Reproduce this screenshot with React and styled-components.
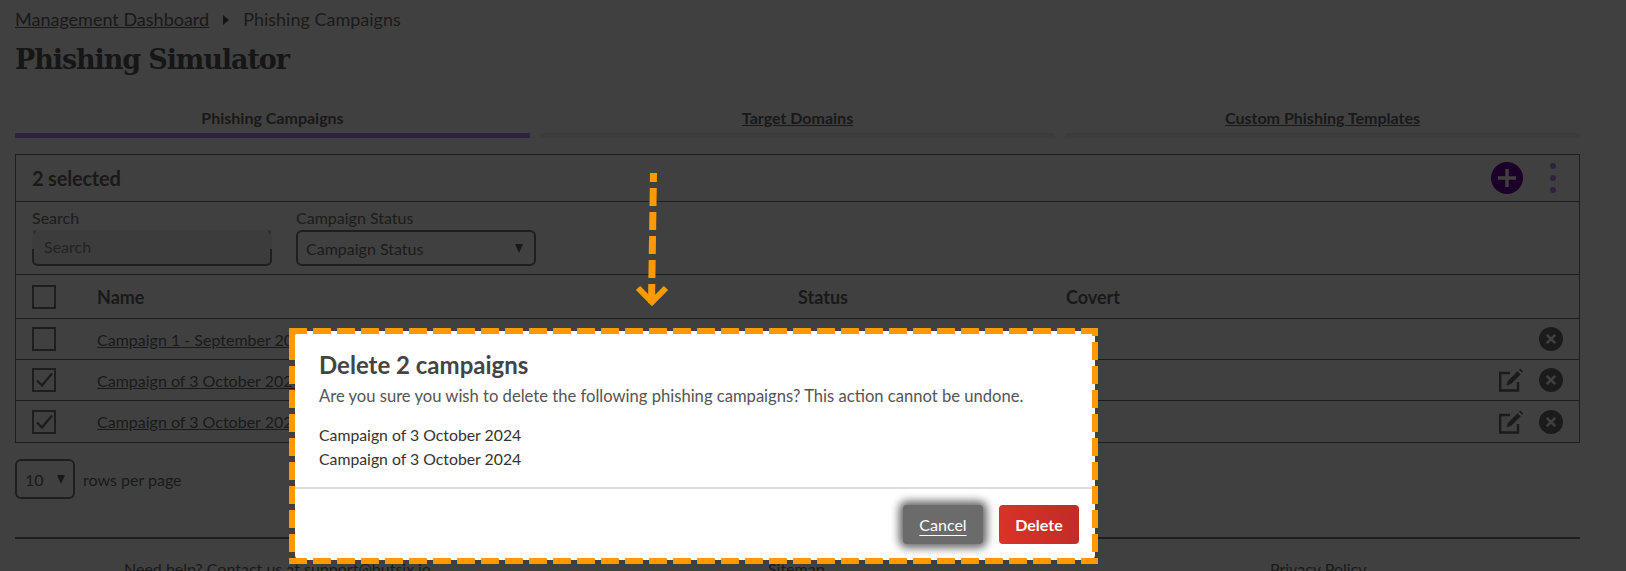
import React from "react";
import styled, { createGlobalStyle } from "styled-components";

const Global = createGlobalStyle`
  html, body { margin: 0; padding: 0; height: 571px; overflow: hidden; background: #fff; }
  body { font-family: Lato, "Liberation Sans", sans-serif; font-size: 16px; color: #666; }
  * { box-sizing: border-box; }
`;

const Page = styled.div`
  position: relative;
  width: 1626px;
  height: 571px;
  overflow: hidden;
`;
const Content = styled.main`
  width: 1596px;
  padding: 8px 0 0 15px;
  display: flex;
  flex-direction: column;
  height: 571px;
`;
const Breadcrumb = styled.nav`
  display: flex;
  align-items: center;
  height: 24px;
  font-size: 18px;
  color: #6e6e6e;
`;
const CrumbLink = styled.a`
  color: #666;
  text-decoration: underline;
`;
const Caret = styled.span`
  width: 0;
  height: 0;
  margin: 2px 14px 0 14px;
  border-left: 6px solid #555;
  border-top: 5px solid transparent;
  border-bottom: 5px solid transparent;
`;
const Title = styled.h1`
  margin: 11px 0 0;
  height: 38px;
  line-height: 38px;
  font-family: "DejaVu Serif", serif;
  font-size: 27px;
  font-weight: 700;
  letter-spacing: -1.1px;
  color: #5a5a5a;
`;
const Tabs = styled.div`
  display: flex;
  gap: 10px;
  margin-top: 27px;
  width: 1565px;
`;
const Tab = styled.div`
  flex: 1;
  height: 32px;
  text-align: center;
  font-size: 16px;
  font-weight: 700;
  line-height: 24px;
  color: #666;
  text-decoration: ${(p) => (p.$active ? "none" : "underline")};
  border-bottom: 5px solid ${(p) => (p.$active ? "#b08cf8" : "#eeeeee")};
`;
const Card = styled.section`
  margin-top: 16px;
  width: 1565px;
  border: 1px solid #777;
`;
const CardHead = styled.div`
  height: 47px;
  display: flex;
  align-items: center;
  padding: 0 16px;
  font-size: 20px;
  font-weight: 700;
  letter-spacing: -0.2px;
  color: #666;
  border-bottom: 1px solid #777;
`;
const Spacer = styled.div`
  flex: 1;
`;
const AddButton = styled.span`
  display: flex;
  margin-right: 27px;
`;
const Dots = styled.span`
  display: flex;
  flex-direction: column;
  gap: 6px;
  margin-right: 7px;
`;
const Dot = styled.i`
  width: 6px;
  height: 6px;
  border-radius: 50%;
  background: #b08cf8;
`;
const Filters = styled.div`
  height: 73px;
  display: flex;
  gap: 24px;
  padding: 6px 16px 0;
  border-bottom: 1px solid #777;
`;
const Field = styled.label`
  display: flex;
  flex-direction: column;
  width: 240px;
  color: #707070;
  line-height: 19px;
`;
const SearchBox = styled.div`
  margin-top: 3px;
  height: 36px;
  padding: 0 10px;
  line-height: 34px;
  color: #8a8a8a;
  background: #efefef;
  border: 2px solid #777;
  border-top: none;
  border-radius: 6px;
  position: relative;
  &::before {
    content: "";
    position: absolute;
    left: -2px;
    top: 0;
    width: 2px;
    height: 19px;
    background: #efefef;
  }
  &::after {
    content: "";
    position: absolute;
    right: -2px;
    top: 0;
    width: 2px;
    height: 19px;
    background: #efefef;
  }
`;
const SelectBox = styled.div`
  margin-top: 3px;
  height: 36px;
  padding: 0 11px 0 8px;
  display: flex;
  align-items: center;
  justify-content: space-between;
  color: #707070;
  border: 2px solid #777;
  border-radius: 6px;
`;
const DownArrow = styled.span`
  width: 0;
  height: 0;
  border-top: 9px solid #666;
  border-left: 4.5px solid transparent;
  border-right: 4.5px solid transparent;
`;
const Row = styled.div`
  height: ${(p) => (p.$head ? "44px" : "41px")};
  display: grid;
  grid-template-columns: 81px 701px 268px 1fr 100px;
  align-items: center;
  border-bottom: ${(p) => (p.$last ? "none" : "1px solid #777")};
  font-weight: ${(p) => (p.$head ? 700 : 400)};
  font-size: ${(p) => (p.$head ? "18px" : "16px")};
  color: #666;
`;
const CheckCell = styled.div`
  padding-left: 16px;
  display: flex;
`;
const Box = styled.span`
  width: 24px;
  height: 24px;
  display: flex;
  align-items: center;
  justify-content: center;
  border: 2px solid #777;
`;
const NameLink = styled.a`
  color: #6a6a6a;
  text-decoration: underline;
  font-size: 16px;
`;
const Actions = styled.div`
  display: flex;
  justify-content: flex-end;
  align-items: center;
  gap: 15px;
  padding-right: 16px;
`;
const Pager = styled.div`
  display: flex;
  align-items: center;
  gap: 8px;
  margin-top: 16px;
  color: #6a6a6a;
`;
const PageSelect = styled.div`
  width: 60px;
  height: 40px;
  padding: 0 8px;
  display: flex;
  align-items: center;
  justify-content: space-between;
  border: 2px solid #777;
  border-radius: 6px;
`;
const Rule = styled.hr`
  width: 1565px;
  margin: 38px 0 0;
  border: none;
  border-top: 2px solid #777;
`;
const Footer = styled.footer`
  display: grid;
  grid-template-columns: 644px 502px 1fr;
  width: 1565px;
  padding: 20px 0 0 109px;
  color: #6a6a6a;
`;
const Overlay = styled.div`
  position: absolute;
  inset: 0;
  background: rgba(0, 0, 0, 0.75);
`;
const Modal = styled.div`
  position: absolute;
  left: 295px;
  top: 331px;
  width: 800px;
  height: 229px;
  background: #fff;
  border-radius: 5px;
  display: flex;
  flex-direction: column;
`;
const ModalBody = styled.div`
  flex: 0 0 158px;
  padding: 18px 24px 0;
  border-bottom: 2px solid #ddd;
`;
const ModalTitle = styled.h2`
  margin: 0;
  font-size: 24px;
  font-weight: 700;
  line-height: 32px;
  color: #444;
`;
const ModalText = styled.p`
  margin: 4px 0 16px;
  font-size: 16.6px;
  line-height: 22px;
  color: #555;
`;
const ModalItem = styled.div`
  line-height: 24px;
  font-size: 15.8px;
  color: #333;
`;
const ModalFoot = styled.div`
  flex: 1;
  display: flex;
  justify-content: flex-end;
  align-items: flex-start;
  gap: 16px;
  padding: 16px 16px 0;
`;
const Button = styled.button`
  width: 80px;
  height: 39px;
  border: none;
  border-radius: 4px;
  font-family: inherit;
  font-size: 16px;
  color: #fff;
`;
const CancelButton = styled(Button)`
  background: #6b6b6b;
  box-shadow: 0 0 9px 4px rgba(0, 0, 0, 0.6);
  text-decoration: underline;
  text-underline-offset: 4px;
`;
const DeleteButton = styled(Button)`
  font-weight: 700;
  background: linear-gradient(70deg, #dc3328, #bf2c26);
`;
const Annotation = styled.svg`
  position: absolute;
  inset: 0;
  pointer-events: none;
`;

const Plus = () => (
  <svg width="32" height="32" viewBox="0 0 32 32">
    <circle cx="16" cy="16" r="16" fill="#6e00a4" />
    <path d="M16 7v18M7 16h18" stroke="#fff" strokeWidth="3.4" />
  </svg>
);
const CloseCircle = () => (
  <svg width="24" height="24" viewBox="0 0 24 24">
    <circle cx="12" cy="12" r="12" fill="#6e6e6e" />
    <path d="M7.8 7.8l8.4 8.4M16.2 7.8l-8.4 8.4" stroke="#fff" strokeWidth="2.6" />
  </svg>
);
const Edit = () => (
  <svg width="26" height="26" viewBox="0 0 26 26" fill="none">
    <path d="M12 6H2.2v17.5H20V15" stroke="#6e6e6e" strokeWidth="2.4" />
    <path d="M8.5 18.5l1.4-4.6L19.5 4.2l3.2 3.2L13 17z" fill="#6e6e6e" />
    <path d="M21 2.8l1.2-1.3 3 3-1.2 1.3z" fill="#6e6e6e" />
  </svg>
);
const Check = () => (
  <svg width="20" height="20" viewBox="0 0 20 20" fill="none">
    <path d="M3 10.5l5 5L18 3.5" stroke="#707070" strokeWidth="2.4" />
  </svg>
);

const rows = [
  { name: "Campaign 1 - September 2024", checked: false, edit: false },
  { name: "Campaign of 3 October 2024", checked: true, edit: true },
  { name: "Campaign of 3 October 2024", checked: true, edit: true },
];

export default function App() {
  return (
    <Page>
      <Global />
      <Content>
        <Breadcrumb>
          <CrumbLink>Management Dashboard</CrumbLink>
          <Caret />
          <span>Phishing Campaigns</span>
        </Breadcrumb>
        <Title>Phishing Simulator</Title>
        <Tabs>
          <Tab $active>Phishing Campaigns</Tab>
          <Tab>Target Domains</Tab>
          <Tab>Custom Phishing Templates</Tab>
        </Tabs>
        <Card>
          <CardHead>
            2 selected
            <Spacer />
            <AddButton><Plus /></AddButton>
            <Dots><Dot /><Dot /><Dot /></Dots>
          </CardHead>
          <Filters>
            <Field>
              Search
              <SearchBox>Search</SearchBox>
            </Field>
            <Field>
              Campaign Status
              <SelectBox>Campaign Status<DownArrow /></SelectBox>
            </Field>
          </Filters>
          <Row $head>
            <CheckCell><Box /></CheckCell>
            <div>Name</div>
            <div>Status</div>
            <div>Covert</div>
            <div />
          </Row>
          {rows.map((r, i) => (
            <Row key={i} $last={i === rows.length - 1}>
              <CheckCell><Box>{r.checked && <Check />}</Box></CheckCell>
              <div><NameLink>{r.name}</NameLink></div>
              <div />
              <div />
              <Actions>
                {r.edit && <Edit />}
                <CloseCircle />
              </Actions>
            </Row>
          ))}
        </Card>
        <Pager>
          <PageSelect>10<DownArrow /></PageSelect>
          rows per page
        </Pager>
        <Rule />
        <Footer>
          <div>Need help? Contact us at support@butsix.io</div>
          <div>Sitemap</div>
          <div>Privacy Policy</div>
        </Footer>
      </Content>
      <Overlay />
      <Modal>
        <ModalBody>
          <ModalTitle>Delete 2 campaigns</ModalTitle>
          <ModalText>Are you sure you wish to delete the following phishing campaigns? This action cannot be undone.</ModalText>
          <ModalItem>Campaign of 3 October 2024</ModalItem>
          <ModalItem>Campaign of 3 October 2024</ModalItem>
        </ModalBody>
        <ModalFoot>
          <CancelButton>Cancel</CancelButton>
          <DeleteButton>Delete</DeleteButton>
        </ModalFoot>
      </Modal>
      <Annotation width="1626" height="571" viewBox="0 0 1626 571" fill="none" stroke="#ff9900" strokeWidth="6">
        <path d="M289 331H1098" strokeDasharray="18 6" />
        <path d="M289 561H1098" strokeDasharray="18 6" />
        <path d="M292 328V360" />
        <path d="M292 366V564" strokeDasharray="18 6" />
        <path d="M1095 328V564" strokeDasharray="18 6" strokeDashoffset="10" />
        <path d="M653.5 173L651.5 303" strokeWidth="7" strokeDasharray="9 6 18 6 18 6 18 6 18 6 19" />
        <path d="M638 288L652 302L666 288" strokeWidth="6" />
      </Annotation>
    </Page>
  );
}
